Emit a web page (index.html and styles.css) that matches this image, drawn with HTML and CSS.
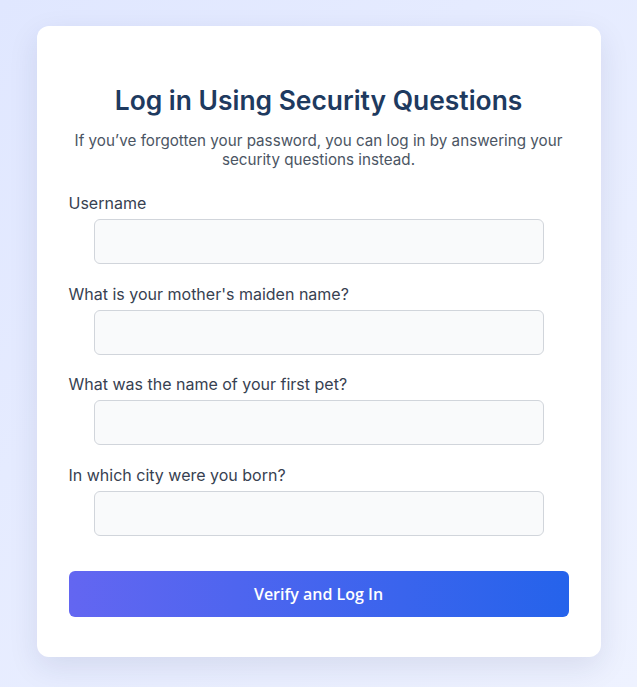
FILE: index.html
```html
<!DOCTYPE html>
<html lang="en">
<head>
<meta charset="utf-8">
<title>Log in Using Security Questions</title>
<link rel="stylesheet" href="styles.css">
</head>
<body>
<main class="card">
  <h1 class="title">Log in Using Security Questions</h1>
  <p class="subtitle">If you’ve forgotten your password, you can log in by answering your security questions instead.</p>
  <form class="form">
    <div class="field">
      <label class="label" for="username">Username</label>
      <input class="input" id="username" type="text">
    </div>
    <div class="field">
      <label class="label" for="q1">What is your mother's maiden name?</label>
      <input class="input" id="q1" type="text">
    </div>
    <div class="field">
      <label class="label" for="q2">What was the name of your first pet?</label>
      <input class="input" id="q2" type="text">
    </div>
    <div class="field">
      <label class="label" for="q3">In which city were you born?</label>
      <input class="input" id="q3" type="text">
    </div>
    <button class="button" type="button">Verify and Log In</button>
  </form>
</main>
</body>
</html>
```
FILE: styles.css
```css
* { box-sizing: border-box; }
html, body { height: 100%; }
body {
  margin: 0;
  font-family: Inter, "Noto Sans", sans-serif;
  background: linear-gradient(135deg, #e0e7ff 0%, #eef2ff 100%);
  padding: 26px 0 30px;
}
.card {
  width: 564px;
  margin: 0 auto;
  background: #ffffff;
  border-radius: 12px;
  padding: 40px 32px 40px;
  box-shadow: 0 10px 30px rgba(30, 41, 90, 0.10);
}
.title {
  margin: 18px 0 0;
  text-align: center;
  font-size: 26.4px;
  line-height: 32px;
  font-weight: 600;
  color: #1e3a5f;
}
.subtitle {
  margin: 15px 0 0;
  text-align: center;
  font-size: 15.2px;
  line-height: 19px;
  color: #4b5563;
}
.form {
  display: flex;
  flex-direction: column;
  margin-top: 25px;
}
.field {
  display: flex;
  flex-direction: column;
  margin-bottom: 20.6px;
}
.label {
  font-size: 16px;
  line-height: 19px;
  color: #374151;
  margin-bottom: 6px;
}
.input {
  width: 90%;
  align-self: center;
  height: 45px;
  border: 1px solid #d1d5db;
  border-radius: 6px;
  background: #f9fafb;
  font: inherit;
  padding: 0 12px;
}
.button {
  margin-top: 15px;
  height: 46px;
  border: none;
  border-radius: 6px;
  background: linear-gradient(90deg, #6366f1 0%, #2563eb 100%);
  color: #ffffff;
  font-family: "Open Sans", "Noto Sans", sans-serif;
  font-size: 16px;
  font-weight: 600;
}
```
